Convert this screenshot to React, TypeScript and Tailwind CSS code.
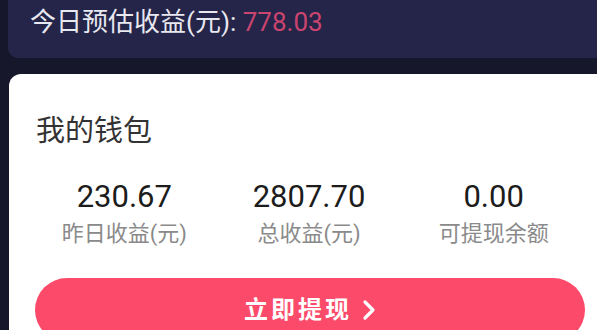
export default function App() {
  const stats = [
    { value: '230.67', label: '昨日收益(元)' },
    { value: '2807.70', label: '总收益(元)' },
    { value: '0.00', label: '可提现余额' },
  ];

  return (
    <div className="w-[597px] h-[330px] overflow-hidden bg-[#17172c] font-['Roboto','Noto_Sans_CJK_SC',sans-serif]">
      {/* Today's estimate */}
      <div className="ml-[8px] h-[58px] bg-[#242548] rounded-bl-[10px] pl-[22px] pt-[6px]">
        <p className="text-[26px] leading-[32px] text-[#e8e8f0]">
          今日预估收益(元): <span className="text-[#cc4470]">778.03</span>
        </p>
      </div>

      {/* Wallet card */}
      <div className="mt-[16px] ml-[9px] h-[300px] bg-white rounded-tl-[12px] pl-[23px] pr-[11px] pt-[39px]">
        <h2 className="text-[29px] leading-[36px] text-[#333333] pl-[4px]">我的钱包</h2>

        <div className="grid grid-cols-3 mt-[30px]">
          {stats.map((s) => (
            <div key={s.label} className="flex flex-col items-center">
              <span className="text-[31px] leading-[36px] text-[#1c1c1c]">{s.value}</span>
              <span className="mt-[5px] text-[22px] leading-[28px] text-[#8a8a8a]">{s.label}</span>
            </div>
          ))}
        </div>

        <button className="mt-[30px] ml-[3px] w-[550px] h-[64px] rounded-full bg-[#fb4a6a] flex items-center justify-center gap-[10px] text-white">
          <span className="text-[24px] font-bold tracking-[3px]">立即提现</span>
          <svg width="14" height="22" viewBox="0 0 14 22" fill="none">
            <path d="M3 3 L11 11 L3 19" stroke="white" strokeWidth="3.2" strokeLinecap="round" strokeLinejoin="round" />
          </svg>
        </button>
      </div>
    </div>
  );
}
